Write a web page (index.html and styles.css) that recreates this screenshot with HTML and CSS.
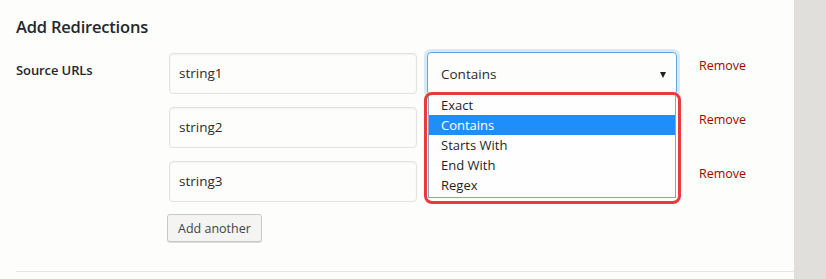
FILE: index.html
```html
<!DOCTYPE html>
<html>
<head>
<meta charset="utf-8">
<link rel="stylesheet" href="styles.css">
</head>
<body>
<div class="page">
  <main class="main">
    <h2 class="title">Add Redirections</h2>
    <div class="form-row">
      <div class="label">Source URLs</div>
      <div class="fields">
        <div class="url-row">
          <div class="input">string1</div>
          <div class="select-wrap">
            <div class="select focused"><span>Contains</span><span class="caret"></span></div>
            <div class="highlight">
              <ul class="listbox">
                <li>Exact</li>
                <li class="selected">Contains</li>
                <li>Starts With</li>
                <li>End With</li>
                <li>Regex</li>
              </ul>
            </div>
          </div>
          <a class="remove">Remove</a>
        </div>
        <div class="url-row">
          <div class="input">string2</div>
          <div class="select-wrap"></div>
          <a class="remove">Remove</a>
        </div>
        <div class="url-row">
          <div class="input">string3</div>
          <div class="select-wrap"></div>
          <a class="remove">Remove</a>
        </div>
        <div class="actions"><button class="btn">Add another</button></div>
      </div>
    </div>
    <div class="rule"></div>
  </main>
  <aside class="side"></aside>
</div>
</body>
</html>
```
FILE: styles.css
```css
html, body {
  margin: 0;
  padding: 0;
}
body {
  background: #fdfdfb;
  font-family: "Open Sans", "Noto Sans", sans-serif;
  color: #23282d;
  font-size: 13px;
}
.page {
  display: flex;
  width: 826px;
  height: 279px;
  overflow: hidden;
}
.main {
  width: 794px;
  flex: none;
  padding-left: 16px;
  box-sizing: border-box;
}
.side {
  flex: 1;
  background: #e0dfdc;
}
.title {
  margin: 15px 0 0 0;
  font-size: 16.5px;
  font-weight: 600;
  line-height: 24px;
  letter-spacing: -0.2px;
}
.form-row {
  display: flex;
  margin-top: 14px;
}
.label {
  width: 152px;
  flex: none;
  font-weight: 600;
  font-size: 13px;
  line-height: 18px;
  padding-top: 8px;
  letter-spacing: -0.1px;
}
.fields {
  display: flex;
  flex-direction: column;
  gap: 13px;
  padding-left: 1px;
}
.url-row {
  display: flex;
  align-items: flex-start;
  height: 41px;
}
.input {
  width: 248px;
  height: 41px;
  box-sizing: border-box;
  border: 1px solid #e3e2df;
  border-radius: 4px;
  box-shadow: inset 0 1px 2px rgba(0,0,0,0.05);
  padding: 0 9px;
  font-size: 13.5px;
  line-height: 39px;
  color: #2b2b2b;
}
.select-wrap {
  position: relative;
  width: 250px;
  margin-left: 10px;
  margin-top: -1px;
}
.select {
  width: 250px;
  height: 43px;
  box-sizing: border-box;
  border: 1px solid #e3e2df;
  border-radius: 4px;
  padding: 0 10px 0 13px;
  display: flex;
  align-items: center;
  justify-content: space-between;
  font-size: 13.5px;
  color: #2b2b2b;
}
.select.focused {
  border-color: #5aa9e6;
  box-shadow: 0 0 0 3px rgba(102,175,233,0.25);
}
.caret {
  width: 0;
  height: 0;
  border-left: 3.5px solid transparent;
  border-right: 3.5px solid transparent;
  border-top: 6px solid #222;
  margin-top: 2px;
}
.highlight {
  position: absolute;
  z-index: 2;
  left: -3px;
  top: 40px;
  width: 257px;
  height: 112px;
  box-sizing: border-box;
  border: 3px solid #e93a3e;
  border-radius: 8px;
  padding: 1px 1px 0 1px;
  background: #fdfdfb;
}
.listbox {
  list-style: none;
  margin: 0;
  padding: 0;
  width: 248px;
  height: 102px;
  box-sizing: border-box;
  border: 1px solid #8ea3c4;
  border-top: none;
  background: #fefefe;
}
.listbox li {
  height: 20px;
  line-height: 20px;
  padding-left: 12px;
  font-size: 13px;
  color: #1e1e1e;
}
.listbox li:first-child {
  height: 19px;
  line-height: 19px;
}
.listbox li.selected {
  background: #1e8ffa;
  color: #fff;
}
.remove {
  margin-left: 22px;
  margin-top: 4px;
  color: #a00;
  font-size: 12.5px;
  line-height: 18px;
}
.actions {
  margin-top: -1px;
}
.btn {
  font-family: inherit;
  font-size: 12.5px;
  color: #444;
  background: #f4f4f3;
  border: 1px solid #c9c9c7;
  border-radius: 3px;
  height: 28px;
  padding: 0 10px;
  margin-left: -2px;
  box-shadow: 0 1px 0 #dcdcdc;
}
.rule {
  margin-top: 29px;
  border-top: 1px solid #e6e6e4;
}
```
